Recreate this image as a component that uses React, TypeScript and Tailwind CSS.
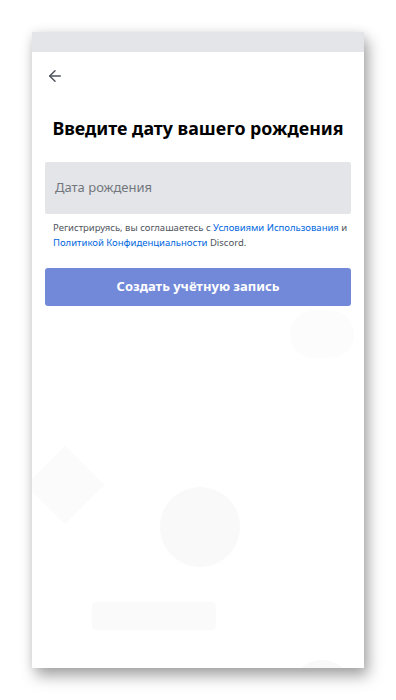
import { ArrowLeft } from "lucide-react";

// Экран регистрации: ввод даты рождения внутри "телефона" с тенью.
export default function App() {
  return (
    <div className="flex h-[700px] w-[396px] bg-white pt-8 pl-8 font-['Noto_Sans',sans-serif]">
      <div className="relative flex h-[636px] w-[332px] flex-col overflow-hidden bg-white shadow-[4px_8px_14px_rgba(0,0,0,0.35),0_0_10px_rgba(0,0,0,0.08)]">
        {/* бледные фоновые фигуры */}
        <div className="absolute left-[128px] top-[455px] h-20 w-20 rounded-full bg-[#f9f9fa]" />
        <div className="absolute left-[60px] top-[570px] h-7 w-[124px] rounded bg-[#fafafa]" />
        <div className="absolute left-[258px] top-[628px] h-16 w-16 rounded-full bg-[#f9f9fa]" />
        <div className="absolute left-[5px] top-[425px] h-14 w-14 rotate-45 bg-[#fbfbfb]" />
        <div className="absolute left-[258px] top-[278px] h-12 w-16 rounded-full bg-[#fcfcfc]" />

        <div className="relative h-5 bg-[#e3e5e8]" />

        <div className="relative flex flex-col px-[13px]">
          <button className="mt-[12px] -ml-[2px] flex h-6 w-6 items-center justify-center text-[#4f545c]">
            <ArrowLeft className="h-[18px] w-[18px]" strokeWidth={2} />
          </button>

          <h1 className="mt-[28px] text-center text-[17.8px] font-bold leading-6 text-black">
            Введите дату вашего рождения
          </h1>

          <div className="mt-[22px] flex h-[52px] items-center rounded-[2px] bg-[#e3e5e8] px-[10px] text-[13px] text-[#72767d]">
            Дата рождения
          </div>

          <p className="mt-[6px] pl-[8px] pr-0 text-[9.5px] leading-[15px] text-[#4f545c]">
            Регистрируясь, вы соглашаетесь с{" "}
            <span className="text-[#0067e0]">Условиями Использования</span> и{" "}
            <span className="text-[#0067e0]">Политикой Конфиденциальности</span> Discord.
          </p>

          <button className="mt-[18px] flex h-[38px] items-center justify-center rounded-[3px] bg-[#7289da] text-[13px] font-bold text-white">
            Создать учётную запись
          </button>
        </div>
      </div>
    </div>
  );
}
